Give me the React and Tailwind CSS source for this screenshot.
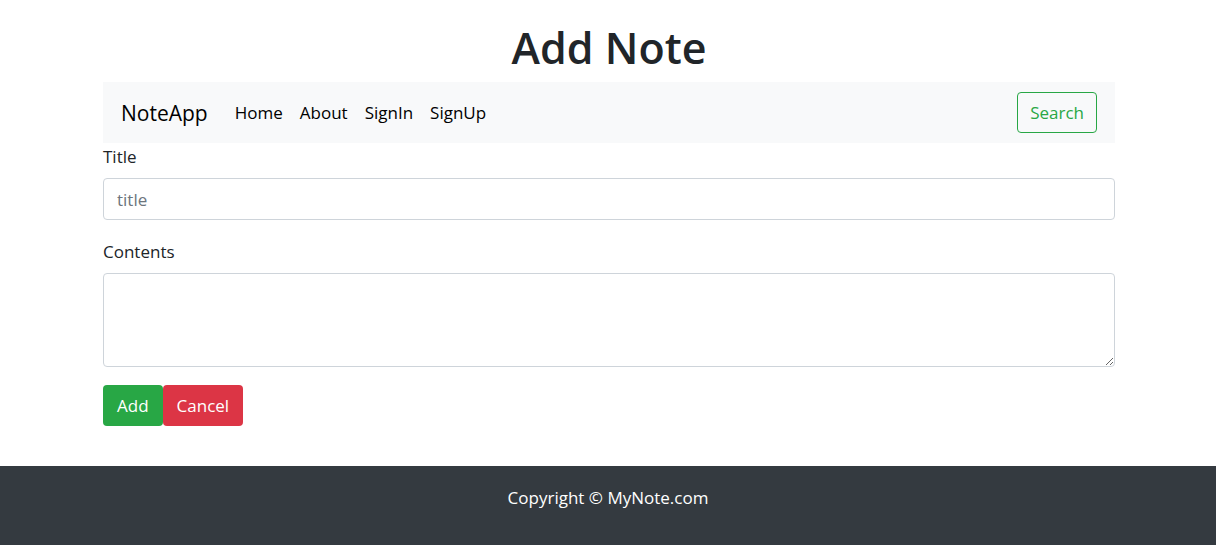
const links = ["Home", "About", "SignIn", "SignUp"];

export default function App() {
  return (
    <div className="bg-white font-['Segoe_UI','Open_Sans',sans-serif] text-[17px] leading-[27px] text-[#212529]">
      <main className="pt-[22px] pr-[101px] pb-10 pl-[103px]">
        <h1 className="pb-2 text-center text-[43px] leading-[52px] font-semibold">Add Note</h1>
        <nav className="flex items-center bg-[#f8f9fa] px-[18px] py-[10px]">
          <a href="#" className="mr-[27px] text-[21px] leading-[34px] text-black">NoteApp</a>
          <ul className="flex grow gap-[17px]">
            {links.map((label) => (
              <li key={label}>
                <a href="#" className="block text-black">{label}</a>
              </li>
            ))}
          </ul>
          <button type="button" className="h-[41px] rounded-[4px] border border-[#28a745] px-3 text-[#28a745]">
            Search
          </button>
        </nav>
        <form>
          <label htmlFor="title" className="mb-2 block">Title</label>
          <input id="title" type="text" placeholder="title" className="mb-[18px] block h-[42px] w-full rounded-[4px] border border-[#ced4da] bg-white px-[13px] placeholder:text-[#6c757d]" />
          <label htmlFor="contents" className="mb-2 block">Contents</label>
          <textarea id="contents" rows={3} className="mb-[18px] block h-[94px] w-full resize-y rounded-[4px] border border-[#ced4da] bg-white px-[13px] py-[6px]" />
          <div className="flex">
            <button type="button" className="h-[41px] rounded-[4px] bg-[#28a745] px-[14px] text-white">Add</button>
            <button type="button" className="h-[41px] rounded-[4px] bg-[#dc3545] px-[14px] text-white">Cancel</button>
          </div>
        </form>
      </main>
      <footer className="bg-[#343a40] pt-[18px] pb-[34px] text-center text-white">Copyright © MyNote.com</footer>
    </div>
  );
}
